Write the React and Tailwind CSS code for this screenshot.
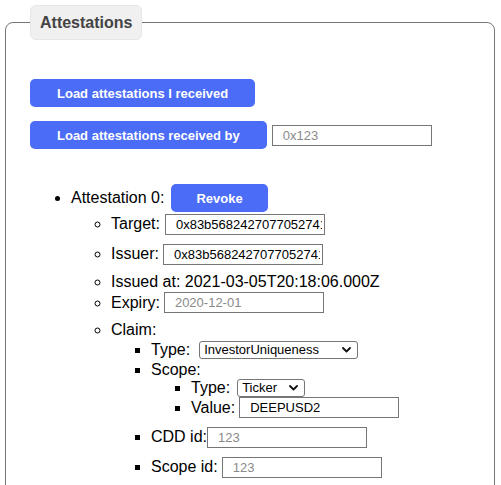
import React from "react";

const btn =
  "h-7 rounded-[5px] bg-[#4a6cf7] text-white text-[13px] font-bold leading-none";

const Field = ({ value, placeholder, className = "" }) => (
  <input
    type="text"
    defaultValue={value}
    placeholder={placeholder}
    className={`h-[21px] w-[160px] border border-[#767676] bg-white pl-[10px] pr-[2px] text-[13px] text-black placeholder:text-[#8a8a8a] outline-none ${className}`}
  />
);

const Select = ({ value, options, className = "" }) => (
  <span className="relative inline-block">
    <select
      defaultValue={value}
      className={`block appearance-none h-[18px] border border-[#767676] rounded-[3px] bg-white pl-[4px] text-[13px] leading-[16px] text-black ${className}`}
    >
      {options.map((o) => (
        <option key={o}>{o}</option>
      ))}
    </select>
    <svg
      className="absolute right-[7px] top-1/2 -translate-y-1/2 pointer-events-none"
      width="9"
      height="6"
      viewBox="0 0 9 6"
      fill="none"
    >
      <path d="M1 1l3.5 3.5L8 1" stroke="#111" strokeWidth="1.8" strokeLinecap="round" strokeLinejoin="round" />
    </svg>
  </span>
);

export default function App() {
  return (
    <div className="min-h-screen bg-white pt-[5px] pl-[5px] font-['Liberation_Sans',Arial,sans-serif] text-black">
      <fieldset className="w-[490px] rounded-lg border border-[#777] px-6 pt-[39px] pb-10">
        <legend className="rounded-md border border-[#e6e6e6] bg-[#f0f0f0] px-[9px] py-2 text-base leading-[17px] font-bold text-[#444]">
          Attestations
        </legend>

        <div className="flex flex-col items-start gap-[14px]">
          <button className={`${btn} px-[27px]`}>Load attestations I received</button>
          <div className="flex items-center gap-[5px]">
            <button className={`${btn} px-[27px]`}>Load attestations received by</button>
            <Field placeholder="0x123" />
          </div>
        </div>

        <ul className="mt-[35px] list-disc pl-[41px] text-base leading-[18px]">
          <li>
            <span className="inline-flex h-7 items-center gap-[7px]">
              Attestation 0:
              <button className={`${btn} px-[25px]`}>Revoke</button>
            </span>
            <ul className="list-[circle] pl-10">
              <li className="mb-[6px]">
                <span className="inline-flex h-6 items-center gap-[5px]">
                  Target:
                  <Field value="0x83b5682427077052741a4c9c5b4a0e1f6d3e2b7a" />
                </span>
              </li>
              <li className="mb-[7px]">
                <span className="inline-flex h-6 items-center gap-[4px]">
                  Issuer:
                  <Field value="0x83b5682427077052741a4c9c5b4a0e1f6d3e2b7a" />
                </span>
              </li>
              <li>Issued at: 2021-03-05T20:18:06.000Z</li>
              <li className="mb-[7px]">
                <span className="inline-flex h-[23px] items-center gap-[4px]">
                  Expiry:
                  <Field placeholder="2020-12-01" />
                </span>
              </li>
              <li>
                Claim:
                <ul className="list-[square] pl-10">
                  <li>
                    <span className="inline-flex h-[22px] items-center gap-[9px]">
                      Type:
                      <Select
                        value="InvestorUniqueness"
                        options={["InvestorUniqueness", "Accredited", "Affiliate", "BuyLockup", "SellLockup", "CustomerDueDiligence", "KnowYourCustomer", "Jurisdiction", "Exempted", "Blocked"]}
                        className="w-[159px]"
                      />
                    </span>
                  </li>
                  <li>
                    Scope:
                    <ul className="list-[square] pl-10">
                      <li>
                        <span className="inline-flex h-[18px] items-center gap-[7px]">
                          Type:
                          <Select
                            value="Ticker"
                            options={["Ticker", "Identity", "Custom"]}
                            className="w-[68px]"
                          />
                        </span>
                      </li>
                      <li className="mb-[8px]">
                        <span className="inline-flex h-[21px] items-center gap-[4px]">
                          Value:
                          <Field value="DEEPUSD2" />
                        </span>
                      </li>
                    </ul>
                  </li>
                  <li className="mb-[8px]">
                    <span className="inline-flex h-[22px] items-center">
                      CDD id:
                      <Field placeholder="123" />
                    </span>
                  </li>
                  <li>
                    <span className="inline-flex h-[22px] items-center gap-[4px]">
                      Scope id:
                      <Field placeholder="123" />
                    </span>
                  </li>
                </ul>
              </li>
            </ul>
          </li>
        </ul>
      </fieldset>
    </div>
  );
}
